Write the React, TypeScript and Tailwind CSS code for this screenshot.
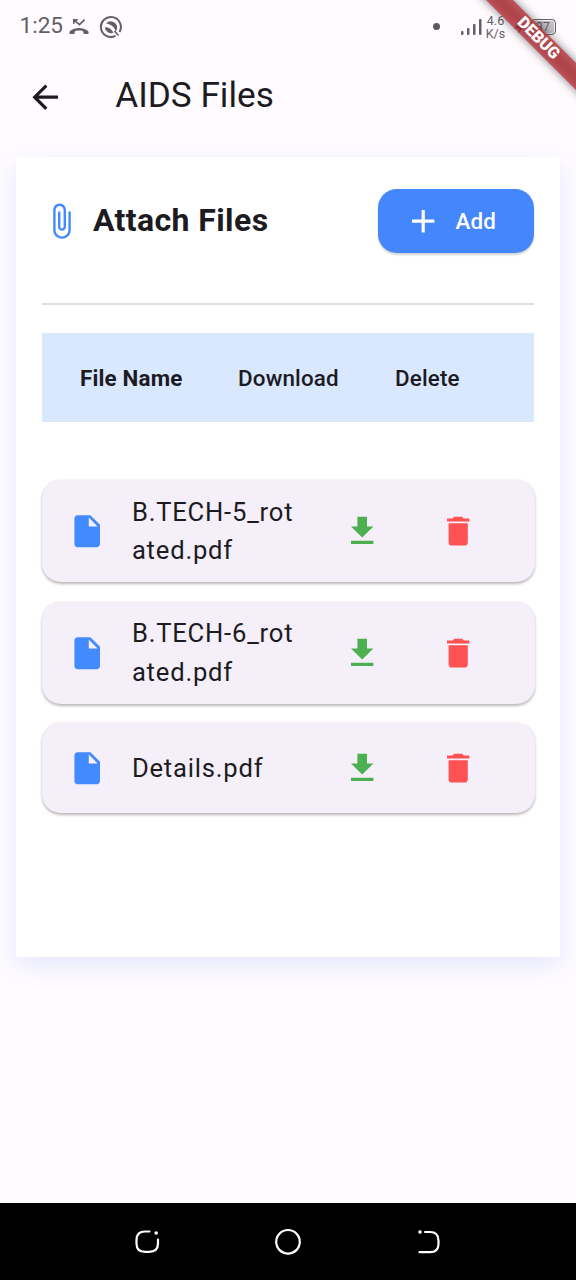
import React from "react";

const files = [
  { name: "B.TECH-5_rotated.pdf", lines: ["B.TECH-5_rot", "ated.pdf"] },
  { name: "B.TECH-6_rotated.pdf", lines: ["B.TECH-6_rot", "ated.pdf"] },
  { name: "Details.pdf", lines: ["Details.pdf"] },
];

const paths = {
  back: "M20 11H7.83l5.59-5.59L12 4l-8 8 8 8 1.41-1.41L7.83 13H20v-2z",
  attach:
    "M16.5 6v11.5c0 2.21-1.79 4-4 4s-4-1.79-4-4V5c0-1.38 1.12-2.5 2.5-2.5s2.5 1.12 2.5 2.5v10.5c0 .55-.45 1-1 1s-1-.45-1-1V6H10v9.5c0 1.38 1.12 2.5 2.5 2.5s2.5-1.12 2.5-2.5V5c0-2.21-1.79-4-4-4S7 2.79 7 5v12.5c0 3.04 2.46 5.5 5.5 5.5s5.5-2.46 5.5-5.5V6h-1.5z",
  add: "M19 13h-6v6h-2v-6H5v-2h6V5h2v6h6v2z",
  file: "M6 2c-1.1 0-1.99.9-1.99 2L4 20c0 1.1.89 2 1.99 2H18c1.1 0 2-.9 2-2V8l-6-6H6zm7 7V3.5L18.5 9H13z",
  download: "M19 9h-4V3H9v6H5l7 7 7-7zM5 18v2h14v-2H5z",
  trash: "M6 19c0 1.1.9 2 2 2h8c1.1 0 2-.9 2-2V7H6v12zM19 4h-3.5l-1-1h-5l-1 1H5v2h14V4z",
};

function Icon({ d, className }: { d: string; className: string }) {
  return (
    <svg viewBox="0 0 24 24" fill="currentColor" className={`size-[38.4px] shrink-0 ${className}`}>
      <path d={d} />
    </svg>
  );
}

function StatusBar() {
  return (
    <div className="flex h-[53px] items-center pl-[19.500px] pr-[20.500px] text-[#626064]">
      <span className="w-[48px] text-[22.600px] leading-none">1:25</span>
      <svg className="h-[22px] w-[23px]" viewBox="0 0 24 24" fill="none" stroke="currentColor">
        <path d="M6 4.5l6 5 5.500-5.500M5.800 8.500V4.300H10" strokeWidth="1.800" />
        <path d="M1.500 19.500c-.7-.7-.7-2.300.2-3.200C4.300 14 8 13 11.500 13s7.200 1 9.800 3.300c.9.900.9 2.500.2 3.200-.4.4-4.300.3-4.900-.2-.5-.5-.2-2.400-.8-2.800-1.500-.9-7.100-.9-8.600 0-.6.4-.3 2.300-.8 2.800-.6.500-4.500.6-4.900.2z" fill="currentColor" stroke="none" />
      </svg>
      <svg className="ml-[8px] size-[24px]" viewBox="0 0 24 24" fill="none" stroke="currentColor">
        <path d="M16.500 20.800A10 10 0 1 1 20.500 17" strokeWidth="2" />
        <path d="M7 8.500A6.500 6.500 0 0 1 18.200 12C18.200 14 17.500 15.500 16.500 16.500C16 12.500 12 9 7 8.500z" fill="currentColor" stroke="none" />
        <path d="M5.800 12.500C9 11.500 12.500 14 14.500 17.800A6.500 6.500 0 0 1 5.800 12.500z" fill="currentColor" stroke="none" />
        <path d="M15.500 16l4 4.500" strokeWidth="1.600" />
      </svg>
      <div className="ml-auto flex items-center">
        <span className="size-[7px] rounded-full bg-[#5b595d]" />
        <svg className="ml-[20px] h-[18px] w-[22px]" viewBox="0 0 22 18" fill="currentColor">
          <rect x="1" y="13" width="2.500" height="4" rx="1" />
          <rect x="7" y="10" width="2.500" height="7" rx="1" />
          <rect x="13" y="6" width="2.500" height="11" rx="1" />
          <rect x="19" y="1" width="2.500" height="16" rx="1" />
        </svg>
        <div className="ml-[4px] w-[20px] text-center text-[12.500px] leading-[13px]">
          <div>4.6</div>
          <div>K/s</div>
        </div>
        <svg className="ml-[7px] h-[18px] w-[15px]" viewBox="0 0 15 18" fill="#3b383c">
          <path d="M8 3L1 10.500h5L5 15l8-7.500H8z" />
        </svg>
        <div className="ml-[3px] flex h-[16px] w-[25px] items-center justify-center rounded-[4px] border-[1.500px] border-[#67656a] bg-[#c3c0c5] text-[12px] leading-none shadow-[inset_0_0_0_1px_#f4f0f5]">
          37
        </div>
      </div>
    </div>
  );
}

function DebugBanner() {
  return (
    <>
      <div className="absolute left-[457.500px] top-[28.900px] h-[19.200px] w-[160px] rotate-45 bg-black/50 blur-[5px]" />
      <div className="absolute left-[457.500px] top-[28.900px] flex h-[19.200px] w-[160px] rotate-45 items-center justify-center bg-[#bd3238]/75 text-[16.300px] font-black leading-none text-white">
        DEBUG
      </div>
    </>
  );
}

function FileRow({ lines }: { lines: string[] }) {
  return (
    <div
      className={`flex items-center rounded-[19px] bg-[#f4eff9] pl-[26px] shadow-[0_1.600px_3px_rgba(0,0,0,0.28)] ${
        lines.length > 1 ? "h-[102.400px]" : "h-[89.600px]"
      }`}
    >
      <Icon d={paths.file} className="text-[#448aff]" />
      <div className="ml-[26px] w-[198px] text-[25.600px] leading-[38.400px] tracking-[0.800px]">
        {lines.map((line) => (
          <div key={line}>{line}</div>
        ))}
      </div>
      <button className="ml-[13.500px] flex">
        <Icon d={paths.download} className="text-[#4caf50]" />
      </button>
      <button className="ml-[57.600px] flex">
        <Icon d={paths.trash} className="text-[#ff5252]" />
      </button>
    </div>
  );
}

function NavBar() {
  return (
    <nav className="flex h-[77px] items-center justify-between bg-black px-[133px] text-white">
      <svg className="size-[28px]" viewBox="0 0 28 28" fill="none" stroke="currentColor" strokeWidth="2.200" strokeLinecap="round">
        <path d="M16.500 3.500H12Q3.500 3.500 3.500 12V15.500Q3.500 23.800 12 23.800H16Q25 23.800 25 15.500V11.500" />
        <circle cx="23.200" cy="5" r="1.800" fill="currentColor" stroke="none" />
      </svg>
      <svg className="size-[28px]" viewBox="0 0 28 28" fill="none" stroke="currentColor" strokeWidth="2.200">
        <circle cx="14" cy="13.800" r="11.800" />
      </svg>
      <svg className="size-[28px]" viewBox="0 0 28 28" fill="none" stroke="currentColor" strokeWidth="2.200" strokeLinecap="round">
        <path d="M10 4H15Q23.500 4 23.500 12.500V16Q23.500 24.200 15 24.200H4.500" />
        <circle cx="5" cy="4" r="1.800" fill="currentColor" stroke="none" />
      </svg>
    </nav>
  );
}

export default function App() {
  return (
    <div className="relative flex h-[1280px] w-[576px] flex-col overflow-hidden bg-[#fffbff] font-['Roboto',sans-serif] text-[#1c1b1f]">
      <StatusBar />
      <header className="flex h-[88px] items-center pl-[25.600px]">
        <Icon d={paths.back} className="" />
        <h1 className="ml-[51.200px] -mt-[2px] text-[35.200px] leading-none">AIDS Files</h1>
      </header>
      <main className="mx-4 mt-4 h-[800px] bg-white px-[26px] pt-8 shadow-[0_8px_24px_rgba(68,120,255,0.150)]">
        <div className="flex h-16 items-center">
          <Icon d={paths.attach} className="-ml-[0.500px] text-[#448aff]" />
          <h2 className="ml-[13px] -mt-[2px] text-[32px] font-bold leading-none tracking-[0.400px]">Attach Files</h2>
          <button className="ml-auto flex h-16 w-[156px] items-center rounded-[19px] bg-[#4486fb] pl-[26px] text-white shadow-[0_1.600px_2px_rgba(0,0,0,0.180)]">
            <Icon d={paths.add} className="" />
            <span className="ml-[13px] text-[22.400px] font-medium leading-none tracking-[0.160px]">Add</span>
          </button>
        </div>
        <div className="mt-[50px] h-[1.600px] bg-[#dedee0]" />
        <div className="mt-[28.400px] flex h-[89px] items-center bg-[#d9e7ff] pl-[38px] pt-[1px] text-[22.400px] leading-none tracking-[0.160px]">
          <span className="w-[158px] font-bold">File Name</span>
          <span className="w-[157px] font-medium">Download</span>
          <span className="font-medium">Delete</span>
        </div>
        <div className="-mx-[0.500px] mt-[58px] flex flex-col gap-[19.200px]">
          {files.map((file) => (
            <FileRow key={file.name} lines={file.lines} />
          ))}
        </div>
      </main>
      <div className="flex-1" />
      <NavBar />
      <DebugBanner />
    </div>
  );
}
